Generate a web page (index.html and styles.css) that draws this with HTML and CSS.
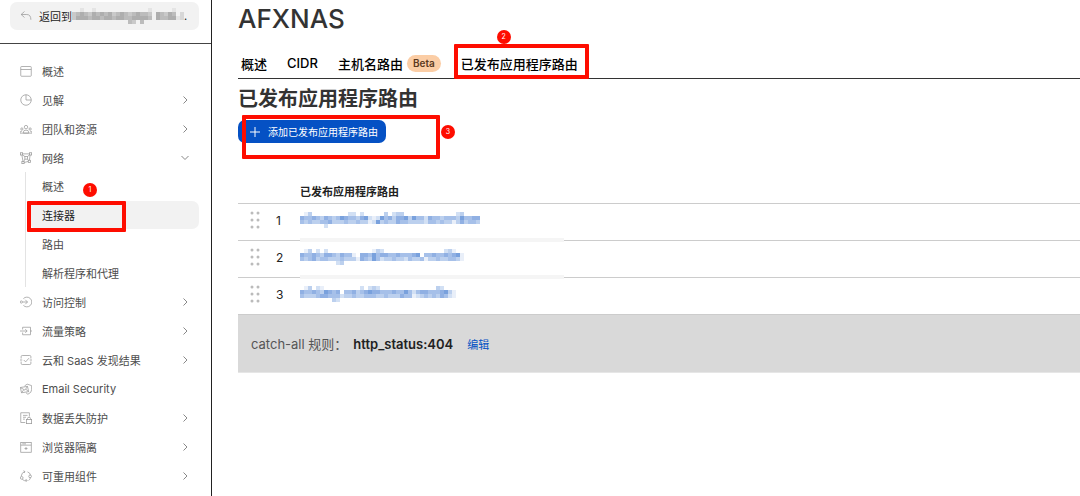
FILE: index.html
```html
<!DOCTYPE html>
<html lang="zh-CN">
<head>
<meta charset="utf-8">
<meta name="viewport" content="width=device-width, initial-scale=1.0">
<title>AFXNAS</title>
<link rel="stylesheet" href="styles.css">
<script src="mosaic.js" defer></script>
</head>
<body>
<aside class="sidebar">
  <div class="account">
    <button type="button" class="back">
      <svg class="icon" viewBox="0 0 16 16"><path d="M6 2L1.500 6L6 10M1.500 6H9Q14.500 6 14.500 13"/></svg>
      <span class="back-text">返回到</span>
      <svg class="mosaic gray" data-cells="0010010000000000000100000100/3454354545345434544305435402/3555455455455445555405445512/0000000000000043040000000000"></svg>
      <span>.</span>
    </button>
  </div>
  <nav>
    <ul class="menu">
      <li><a class="item" href="#">
        <svg class="icon" viewBox="0 0 16 16"><rect x="1" y="2" width="14" height="13" rx="1"/><path d="M1 6H15"/></svg>
        <span>概述</span></a></li>
      <li><a class="item" href="#">
        <svg class="icon" viewBox="0 0 16 16"><circle cx="8" cy="8" r="7"/><path d="M8 1V8H15"/></svg>
        <span>见解</span>
        <svg class="chevron" viewBox="0 0 10 10"><path d="M3.500 1.500L7 5L3.500 8.500"/></svg></a></li>
      <li><a class="item" href="#">
        <svg class="icon" viewBox="0 0 16 16"><circle cx="8" cy="5.500" r="2.300"/><circle cx="2.500" cy="8" r="1.500"/><circle cx="13.500" cy="8" r="1.500"/><path d="M4.500 13.500V12Q4.500 9.500 8 9.500T11.500 12V13.500ZM0 13.500V12Q0 11 2.500 11M16 13.500V12Q16 11 13.500 11M0 13.500H16"/></svg>
        <span>团队和资源</span>
        <svg class="chevron" viewBox="0 0 10 10"><path d="M3.500 1.500L7 5L3.500 8.500"/></svg></a></li>
      <li>
        <a class="item" href="#">
          <svg class="icon" viewBox="0 0 16 16"><rect x="0.500" y="1" width="3" height="3"/><rect x="12.500" y="1" width="3" height="3"/><rect x="2.500" y="12.500" width="3" height="3"/><rect x="11" y="11" width="3" height="3"/><rect x="6.500" y="6" width="3.500" height="3.500"/><path d="M3.500 2.500H12.500M2.500 4L4 12.500M13.500 4L12.500 11M5.500 14L11 12.500M3.500 4L6.500 6M10 6L12.500 4M6.500 9.500L5 12.500M10 9.500L11 11"/></svg>
          <span>网络</span>
          <svg class="chevron" viewBox="0 0 10 10"><path d="M1.500 3L5 6.500L8.500 3"/></svg></a>
        <ul class="submenu">
          <li><a class="subitem" href="#">概述</a></li>
          <li><a class="subitem active" href="#">连接器<span class="mark mark-menu"></span><span class="step step-menu">1</span></a></li>
          <li><a class="subitem" href="#">路由</a></li>
          <li><a class="subitem" href="#">解析程序和代理</a></li>
        </ul>
      </li>
      <li><a class="item" href="#">
        <svg class="icon" viewBox="0 0 16 16"><path d="M4.500 3.500A6.500 6.500 0 1 1 4.500 12.500M3.500 8H10M7 5L10 8L7 11"/><circle cx="1.800" cy="8" r="1.500"/></svg>
        <span>访问控制</span>
        <svg class="chevron" viewBox="0 0 10 10"><path d="M3.500 1.500L7 5L3.500 8.500"/></svg></a></li>
      <li><a class="item" href="#">
        <svg class="icon" viewBox="0 0 16 16"><path d="M3.500 6V3H14V13H3.500V10M0 8H9.500M7 5.500L9.500 8L7 10.500M14 8H16"/></svg>
        <span>流量策略</span>
        <svg class="chevron" viewBox="0 0 10 10"><path d="M3.500 1.500L7 5L3.500 8.500"/></svg></a></li>
      <li><a class="item" href="#">
        <svg class="icon" viewBox="0 0 16 16"><path d="M1.500 6V3.500Q1.500 2 3 2H13Q14.500 2 14.500 3.500V6M1.500 10V12.500Q1.500 14 3 14H13Q14.500 14 14.500 12.500V10M0 8H3M13 8H16M5 8L7.500 10.500L12 5.500"/></svg>
        <span>云和 SaaS 发现结果</span>
        <svg class="chevron" viewBox="0 0 10 10"><path d="M3.500 1.500L7 5L3.500 8.500"/></svg></a></li>
      <li><a class="item" href="#">
        <svg class="icon" viewBox="0 0 16 16"><path d="M6 4L9.500 1.500L15.500 3.500V9Q15.500 13 10.500 15L8 13M.5 6L10 4.500L11.500 11.500L2 13ZM.5 6L6.500 9.500L10 4.500M2 13L5 9M11.500 11.500L8 8.500"/></svg>
        <span>Email Security</span></a></li>
      <li><a class="item" href="#">
        <svg class="icon" viewBox="0 0 16 16"><path d="M7 14H1V1H12.500V6M4 4.500H10M4 7H8M4 9.500H6.500"/><rect x="8.500" y="10" width="7" height="5.500"/><path d="M10 10V8.500Q10 7 12 7T14 8.500V10"/></svg>
        <span>数据丢失防护</span>
        <svg class="chevron" viewBox="0 0 10 10"><path d="M3.500 1.500L7 5L3.500 8.500"/></svg></a></li>
      <li><a class="item" href="#">
        <svg class="icon" viewBox="0 0 16 16"><rect x="1" y="2" width="14" height="13"/><path d="M1 5.500H15M3 3.800H8M8 8V12M6 10H10"/></svg>
        <span>浏览器隔离</span>
        <svg class="chevron" viewBox="0 0 10 10"><path d="M3.500 1.500L7 5L3.500 8.500"/></svg></a></li>
      <li><a class="item" href="#">
        <svg class="icon" viewBox="0 0 16 16"><path d="M6.500 2Q2 3.500 1.500 8.500M3 12.500Q5.500 15 9 14M10 2.500Q13.500 3.500 14 7M14 10Q13.500 12.500 11.500 14M4.500 1L6.500 2L5.500 4M7.500 12L9.500 14L7.500 16"/><circle cx="2.300" cy="10.500" r="1.800"/><circle cx="13.500" cy="8.500" r="1.800"/></svg>
        <span>可重用组件</span>
        <svg class="chevron" viewBox="0 0 10 10"><path d="M3.500 1.500L7 5L3.500 8.500"/></svg></a></li>
    </ul>
  </nav>
</aside>
<main class="content">
  <h1>AFXNAS</h1>
  <nav class="tabs">
    <a href="#">概述</a>
    <a href="#">CIDR</a>
    <a href="#">主机名路由<span class="beta">Beta</span></a>
    <a href="#">已发布应用程序路由<span class="mark mark-tab"></span><span class="step step-tab">2</span></a>
  </nav>
  <h2>已发布应用程序路由</h2>
  <div class="actions">
    <button type="button" class="add">
      <svg class="plus" viewBox="0 0 12 12"><path d="M6 1V11M1 6H11"/></svg>
      添加已发布应用程序路由
    </button>
    <span class="mark mark-add"></span>
    <span class="step step-add">3</span>
  </div>
  <table class="routes">
    <thead>
      <tr><th class="grip"></th><th class="num"></th><th>已发布应用程序路由</th></tr>
    </thead>
    <tbody>
      <tr>
        <td class="grip"><svg viewBox="0 0 10 18"><path d="M2 2h0M8 2h0M2 9h0M8 9h0M2 16h0M8 16h0"/></svg></td>
        <td class="num">1</td>
        <td class="host"><a href="#"><svg class="mosaic" data-cells="013000000000220200000302330000000000000230000/544543543465443562126453556364425443444364455/434334453334334331263433544333324434331353443/000000200000000000000000000000000000000000000"></svg></a></td>
      </tr>
      <tr>
        <td class="grip"><svg viewBox="0 0 10 18"><path d="M2 2h0M8 2h0M2 9h0M8 9h0M2 16h0M8 16h0"/></svg></td>
        <td class="num">2</td>
        <td class="host"><a href="#"><svg class="mosaic" data-cells="013020200000000000132000000000000000231000/544543554354410554645544544456044544545610/434534433343331543642334332433413343344310/000000000230000000000000000000000000000000"></svg></a></td>
      </tr>
      <tr>
        <td class="grip"><svg viewBox="0 0 10 18"><path d="M2 2h0M8 2h0M2 9h0M8 9h0M2 16h0M8 16h0"/></svg></td>
        <td class="num">3</td>
        <td class="host"><a href="#"><svg class="mosaic" data-cells="013021000000000202320000000000000032000/544543654504453456554445446424554445631/433345544423343344433433354412343435421/000000003200000000000000000000000000000"></svg></a></td>
      </tr>
    </tbody>
  </table>
  <div class="catch-all">
    <span class="rule">catch-all 规则：</span>
    <strong>http_status:404</strong>
    <a href="#">编辑</a>
  </div>
</main>
</body>
</html>
```
FILE: styles.css
```css
* {
  box-sizing: border-box;
}
body {
  margin: 0;
  min-height: 100vh;
  display: flex;
  background: #fff;
  color: #222;
  font-family: Inter, "Noto Sans CJK SC", sans-serif;
  font-size: 11px;
  overflow: hidden;
}
a {
  color: inherit;
  text-decoration: none;
}
ul {
  list-style: none;
  margin: 0;
  padding: 0;
}
button {
  border: 0;
  font-family: inherit;
}
svg {
  fill: none;
  stroke: currentColor;
  flex: none;
}

/* sidebar */
.sidebar {
  width: 212px;
  flex: none;
  border-right: 1px solid #222;
}
.account {
  height: 44px;
  padding: 2px 12px 0 10px;
  border-bottom: 1px solid #444;
}
.back {
  width: 100%;
  height: 28px;
  display: flex;
  align-items: center;
  padding: 0 10px;
  border-radius: 7px;
  background: #f2f2f2;
  color: #222;
  font-size: 11px;
}
.back-text {
  margin-left: 7px;
  white-space: nowrap;
}
.icon {
  width: 12px;
  height: 12px;
  color: #999;
}
.menu {
  padding: 12px 12px 0 10px;
}
.item {
  height: 29px;
  display: flex;
  align-items: center;
  gap: 10px;
  padding: 0 9px 0 10px;
  color: #4d4d4d;
}
.chevron {
  width: 10px;
  height: 10px;
  margin-left: auto;
  color: #888;
}
.submenu {
  margin-left: 15px;
  padding-left: 4px;
  border-left: 1px solid #e3e3e3;
}
.subitem {
  position: relative;
  height: 28px;
  margin-bottom: 1px;
  display: flex;
  align-items: center;
  padding-left: 12px;
  border-radius: 7px;
  color: #4d4d4d;
}
.submenu li:last-child .subitem {
  margin-bottom: 0;
}
.subitem.active {
  background: #f2f2f2;
  color: #222;
}

/* numbered red highlights */
.mark {
  position: absolute;
  border: 4px solid #fe0d00;
  border-radius: 1px;
}
.step {
  position: absolute;
  width: 14px;
  height: 14px;
  border-radius: 50%;
  background: #fe0d00;
  color: #fff;
  font-size: 7px;
  font-weight: 400;
  line-height: 14px;
  text-align: center;
}
.mark-menu {
  left: -3px;
  top: 0;
  width: 99px;
  height: 31px;
}
.step-menu {
  left: 53px;
  top: -18px;
}
.mark-tab {
  inset: -4px -11px -1px -7px;
}
.step-tab {
  left: 36px;
  top: -18px;
}
.mark-add {
  left: 4px;
  top: -5px;
  width: 198px;
  height: 44px;
}
.step-add {
  left: 203px;
  top: 5px;
}

/* content */
.content {
  flex: 1;
  min-width: 0;
  padding-left: 26px;
}
h1 {
  margin: 0;
  padding-top: 4px;
  font-size: 26px;
  font-weight: 500;
  line-height: 30px;
  color: #333;
}
.tabs {
  display: flex;
  align-items: flex-end;
  gap: 20px;
  height: 45px;
  padding-left: 3px;
  border-bottom: 1px solid #333;
  color: #000;
  font-size: 13px;
  font-weight: 500;
}
.tabs a {
  position: relative;
  height: 30px;
  display: flex;
  align-items: center;
  white-space: nowrap;
}
.beta {
  margin-left: 4px;
  padding: 0 6px;
  border-radius: 9px;
  background: #fbcda5;
  color: #5c3a1e;
  font-size: 10px;
  font-weight: 600;
  line-height: 17px;
}
h2 {
  margin: 0;
  font-size: 20px;
  font-weight: 700;
  line-height: 40px;
  color: #333;
}
.actions {
  position: relative;
  margin-top: 1px;
}
.add {
  height: 23px;
  display: flex;
  align-items: center;
  gap: 7px;
  padding: 0 8px 0 11px;
  border-radius: 7px;
  background: #0551c4;
  color: #fff;
  font-size: 10px;
}
.plus {
  width: 12px;
  height: 12px;
}
.routes {
  width: 100%;
  margin-top: 36px;
  border-collapse: collapse;
}
.routes th {
  height: 24px;
  padding: 0;
  text-align: left;
  font-weight: 600;
}
.routes td {
  height: 37px;
  padding: 0 0 3px;
  border-top: 1px solid #ccc;
  font-size: 12px;
}
.routes .grip {
  width: 38px;
  padding-left: 12px;
}
.grip svg {
  display: block;
  width: 10px;
  height: 18px;
  color: #bbb;
  stroke-width: 3;
  stroke-linecap: round;
}
.routes .num {
  width: 24px;
}
.host {
  position: relative;
}
.host a,
.mosaic {
  display: block;
}
.mosaic {
  color: #3470cc;
}
.mosaic.gray {
  color: #777;
}
/* light strip lying over the line between two rows */
tr:not(:last-child) .host::after {
  content: '';
  position: absolute;
  left: 0;
  bottom: -2px;
  width: 264px;
  height: 4px;
  background: #f5f5f5;
}
.catch-all {
  height: 59px;
  display: flex;
  align-items: center;
  padding-left: 13px;
  border-top: 1px solid #ccc;
  border-bottom: 1px solid #e6e6e6;
  background: #d9d9d9;
  font-size: 13px;
}
.rule {
  color: #555;
}
.catch-all strong {
  margin-left: 6px;
  font-weight: 600;
}
.catch-all a {
  margin-left: 14px;
  color: #0551c4;
  font-size: 11px;
}
```
FILE: mosaic.js
```js
// one digit per 4px cell, 0 is empty and 6 is the darkest
var cell = 4;
document.querySelectorAll('.mosaic').forEach(function (svg) {
  var rows = svg.dataset.cells.split('/');
  svg.setAttribute('width', rows[0].length * cell);
  svg.setAttribute('height', rows.length * cell);
  rows.forEach(function (row, y) {
    row.split('').forEach(function (level, x) {
      if (level == '0') return;
      var rect = document.createElementNS('http://www.w3.org/2000/svg', 'rect');
      rect.setAttribute('x', x * cell);
      rect.setAttribute('y', y * cell);
      rect.setAttribute('width', cell);
      rect.setAttribute('height', cell);
      rect.setAttribute('fill', 'currentColor');
      rect.setAttribute('stroke', 'none');
      rect.setAttribute('fill-opacity', level * 0.11);
      svg.appendChild(rect);
    });
  });
});
```
